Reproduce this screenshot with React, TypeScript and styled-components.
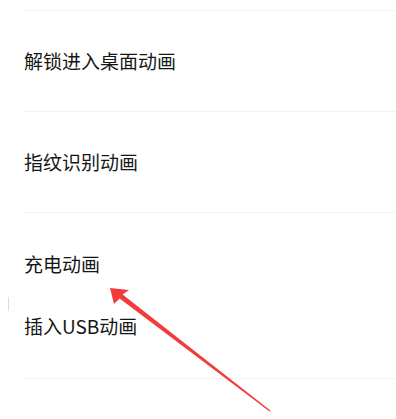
import React from 'react';
import styled, { createGlobalStyle } from 'styled-components';

const GlobalStyle = createGlobalStyle`
  html, body {
    margin: 0;
    padding: 0;
    background: #ffffff;
  }
  body {
    font-family: "Noto Sans CJK SC", "Noto Sans", sans-serif;
  }
`;

const Page = styled.div`
  position: relative;
  width: 396px;
  height: 419px;
  overflow: hidden;
  background: #ffffff;
  padding-top: 10px;
  box-sizing: border-box;
`;

const List = styled.div`
  display: flex;
  flex-direction: column;
  padding-left: 24px;
`;

const Divider = styled.div`
  height: 1px;
  background: #f3f3f3;
`;

const Row = styled.div<{ $height: number; $top?: boolean }>`
  height: ${(p) => p.$height}px;
  display: flex;
  align-items: ${(p) => (p.$top ? 'flex-start' : 'center')};
`;

const Label = styled.span`
  font-size: 19px;
  line-height: 25px;
  color: #161616;
  margin-top: -2px;
`;

const Arrow = styled.svg`
  position: absolute;
  left: 0;
  top: 0;
  pointer-events: none;
`;

const ScrollMark = styled.div`
  position: absolute;
  left: 8px;
  top: 297px;
  width: 1px;
  height: 14px;
  background: #dcdcdc;
`;

const items = [
  { label: '解锁进入桌面动画', height: 100, divider: true },
  { label: '指纹识别动画', height: 100, divider: true },
  { label: '充电动画', height: 102, divider: false },
  { label: '插入USB动画', height: 63, divider: true, top: true },
];

export default function App() {
  return (
    <>
      <GlobalStyle />
      <Page>
        <List>
          <Divider />
          {items.map((it) => (
            <React.Fragment key={it.label}>
              <Row $height={it.height} $top={it.top}>
                <Label>{it.label}</Label>
              </Row>
              {it.divider && <Divider />}
            </React.Fragment>
          ))}
        </List>
        <ScrollMark />
        <Arrow width="396" height="419" viewBox="0 0 396 419">
          <polygon
            points="110,288 129,290 122.6,294.5 270.4,410.6 269.6,411.4 119.6,298.5 114,304"
            fill="#f23b3b"
          />
        </Arrow>
      </Page>
    </>
  );
}
